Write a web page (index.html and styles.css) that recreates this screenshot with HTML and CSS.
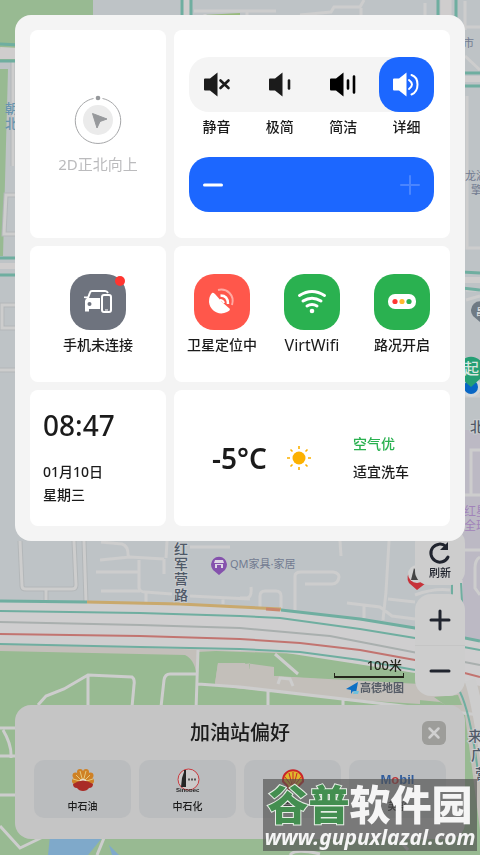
FILE: index.html
```html
<!DOCTYPE html>
<html lang="zh-CN">
<head>
<meta charset="utf-8">
<meta name="viewport" content="width=device-width, initial-scale=1">
<title>地图控制中心</title>
<link rel="stylesheet" href="styles.css">
</head>
<body>
<svg class="map" viewBox="0 0 480 855" preserveAspectRatio="xMidYMin slice" aria-hidden="true">
  <rect width="480" height="855" fill="#bec3c6"/>
  <path d="M440 430H480V640H455V520Z" fill="#bcb9c4"/>
  <path d="M0 0H93V60H0ZM0 69H8L3 256H0Z" fill="#98ba92"/>
  <path d="M204 15L240 13V20H204Z" fill="#98ba7c"/>
  <!-- parks -->
  <path d="M0 645H200L480 670V855H0Z" fill="#c3bfba"/>
  <path d="M0 651L185 655Q196 660 197 680V652L216 651L330 655L440 669V686L420 684L274 676V667L245 663L248 671H249L250 663H218L215 683H240L440 702L465 715L480 830V855H0Z" fill="#98ba92"/>
  <path d="M218 663L249 664V669L274 670V676L420 686V704L340 699L240 689L215 684Z" fill="#c3bfba"/>
  <path d="M240 689L300 693L385 705H240ZM434 697L458 695L462 705H445Z" fill="#98ba92"/>
  <path d="M50 836H100L119 855H48Z" fill="#7fa9ca"/>
  <path d="M102 838L88 855H112L108 842Z" fill="#98ba92"/>
  <!-- side streets -->
  <g fill="none" stroke="#b3b7b9" stroke-width="5">
    <path d="M13 60V166M15 195H6L4 234H15M0 370H15M2 305H20V328H2ZM20 541L22 586Q22 589 26 589H72Q76 589 76 585L74 541M46 590V602M84 541L86 602"/>
  </g>
  <g fill="none" stroke="#cdcdcd" stroke-width="3">
    <path d="M13 60V166M15 195H6L4 234H15M0 370H15M2 305H20V328H2ZM20 541L22 586Q22 589 26 589H72Q76 589 76 585L74 541M46 590V602M84 541L86 602"/>
    <path d="M101 542L122 544Q129 546 128 558M100 560L130 557L164 559M167 541L166 558M164 559V574M96 572H139M139 560V588Q140 592 145 592L172 594M101 591H140M146 593V602M190 547H230M190 596L250 599M223 598V604M340 541L341 556M295 610V576Q295 572 301 572H333Q339 573 339 577Q338 584 332 584H305M240 598H247Q252 597 251 587M260 608V596Q260 591 265 591H276Q281 591 281 596V608M389 541L386 592L383 620M347 603L380 607L392 616L415 619M388 599L415 602M364 606V618M415 595Q434 588 450 590M465 550H480M480 557Q475 560 475 568V588L480 595"/>
    <path d="M194 11H276M205 14V20M247 12V16M300 15L331 12L334 7H360L364 0M361 8L361 16M425 3V15M465 27H480M465 1V30M465 56L480 70M467 96V248H480M466 290H480M470 395H480M471 495V450H480M465 495H480M465 396H480M466 300L480 296"/>
    <path d="M38 705L46 696L64 689L88 675L132 677Q135 679 134 685L132 707M88 675V708M161 707L164 680Q165 674 170 674H196M198 650L196 710M198 684L240 687L480 715M275 654L298 674M268 690V710M278 684L280 678L290 679L293 686M343 698V706"/>
    <path d="M0 728H18M3 730Q12 745 11 758M0 756H18M0 795H18M0 826L20 848L45 836M104 838L97 855M395 835L408 850M290 855Q295 848 320 854"/>
  </g>
  <path d="M186 0V18M446 0V20" stroke="#cfcdcd" stroke-width="11"/>
  <path d="M182 0V20M191 0V20M438 0V20M456 0V20M0 44L20 45M0 61L20 61M462 73H480M462 86H480M0 258H20M0 275H20M462 272L480 273M462 288L480 290" fill="none" stroke="#6faea0" stroke-width="3"/>
  <path d="M0 50L20 51M0 56L20 56M462 79H480M0 266H20M462 280H480" stroke="#cfcdcd" stroke-width="6"/>
  <!-- expressway -->
  <path d="M0 601L180 605L280 609L415 628L480 641V686L415 673L280 652L180 649L0 644Z" fill="#cfcecf"/>
  <g fill="none" stroke-width="3">
    <path d="M0 601L87 602M281 610L360 619L415 628L480 641" stroke="#6faea0"/>
    <path d="M87 602L180 604L240 607L281 609" stroke="#c9a96d"/>
    <path d="M266 609L280 610" stroke="#c9876d"/>
    <path d="M0 611L140 613L240 616L280 618L360 629L415 638L480 650M0 644L140 647L240 649L300 652L360 660L415 670" stroke="#6faea0" stroke-width="2"/>
    <path d="M0 622L140 625L240 628L330 636L480 665" stroke="#a9afae" stroke-width="2"/>
    <path d="M0 634L140 636L240 639L300 643L360 650L415 660L480 677" stroke="#c27470" stroke-width="2"/>
  </g>
  <path d="M457 580V600M470 680Q478 703 490 790" fill="none" stroke="#cdcdcd" stroke-width="11"/>
  <path d="M452 583V600M461 583L464 640M460 692Q471 714 479 780" fill="none" stroke="#6faea0" stroke-width="2"/>
  <!-- labels -->
  <g class="map-road">
    <text x="174" y="554">红</text><text x="174" y="569">军</text><text x="174" y="584">营</text><text x="174" y="600">路</text>
    <text x="468" y="741">来</text><text x="471" y="760">广</text><text x="475" y="779">营</text><text x="470" y="432">北</text>
  </g>
  <g class="map-area">
    <text x="5" y="113">朝</text><text x="5" y="128">北</text>
  </g>
  <g class="map-poi">
    <text x="463" y="47">市</text><text x="465" y="180">龙湖</text><text x="471" y="194">擎</text><text x="230" y="568">QM家具·家居</text>
  </g>
  <g class="map-mall"><text x="464" y="516">红星</text><text x="464" y="530">全球</text></g>
  <!-- pins -->
  <path d="M219 575L213 570A8 8 0 1 1 225 570Z" fill="#8552ad"/>
  <path d="M215 560H223L224 563H214ZM215 564H223V568H221V565H217V568H215Z" fill="#ded6e5"/>
  <path d="M480 322L473 316A9 9 0 1 1 487 316Z" fill="#6f7a84"/><text x="476" y="315" class="pin-small">昌</text>
  <circle cx="471" cy="387" r="10" fill="#d2d7da"/><circle cx="471" cy="387" r="7" fill="#0866c4"/>
  <path d="M471 387L461 378A13 13 0 1 1 481 378Z" fill="#259f74"/><text x="464" y="374" class="pin-start">起</text>
  <path d="M417 590L409 583A10 10 0 1 1 426 583Z" fill="#c7333a"/><circle cx="417" cy="574" r="9" fill="#d0d0d0"/>
  <path d="M411 580L414 568L417 573L419 565V580Z" fill="#444"/>
</svg>

<main class="screen">
  <section class="panel">
    <button class="card compass">
      <svg width="48" height="50" viewBox="0 0 48 50" aria-hidden="true">
        <path d="M28.500 4.500A22.700 22.700 0 1 1 19.500 4.500" fill="none" stroke="#a5a6a8" stroke-width="1"/>
        <circle cx="24" cy="4" r="2.300" fill="#96989b"/><circle cx="24" cy="26" r="15" fill="#ebebeb"/>
        <path d="M18.500 19.500L33 25L26 27.500L23 34Z" fill="#97999c" stroke="#97999c" stroke-linejoin="round"/>
      </svg>
      <span>2D正北向上</span>
    </button>

    <section class="card volume">
      <div class="modes">
        <button class="mode"><span class="mode-icon"><svg width="30" height="28" viewBox="0 0 30 28" aria-hidden="true"><path class="speaker" d="M3 7.500H8L15.500 1.500V25.500L8 19.500H3Q2 19.500 2 18.500V8.500Q2 7.500 3 7.500Z"/><path class="line" d="M18.500 9.500L26.500 17M26.500 9.500L18.500 17"/></svg></span><span>静音</span></button>
        <button class="mode"><span class="mode-icon"><svg width="30" height="28" viewBox="0 0 30 28" aria-hidden="true"><path class="speaker" d="M5 7.500H10L17.500 1.500V25.500L10 19.500H5Q4 19.500 4 18.500V8.500Q4 7.500 5 7.500Z"/><path class="line" d="M24 9.500V17.500"/></svg></span><span>极简</span></button>
        <button class="mode"><span class="mode-icon"><svg width="30" height="28" viewBox="0 0 30 28" aria-hidden="true"><path class="speaker black" d="M3 7.500H8L15.500 1.500V25.500L8 19.500H3Q2 19.500 2 18.500V8.500Q2 7.500 3 7.500Z"/><path class="line black" d="M20 9.500V17.500M26 5.500V21.500"/></svg></span><span>简洁</span></button>
        <button class="mode active"><span class="mode-icon"><svg width="30" height="28" viewBox="0 0 30 28" aria-hidden="true"><path class="speaker" d="M3 7.500H8L15.500 1.500V25.500L8 19.500H3Q2 19.500 2 18.500V8.500Q2 7.500 3 7.500Z"/><path class="wave" d="M18 9Q24 13.500 18 18M20.500 4C28.500 6.500 28.500 20.500 20.500 23.500"/></svg></span><span>详细</span></button>
      </div>
      <div class="level">
        <button aria-label="降低音量"><svg width="20" height="20" viewBox="0 0 20 20"><path d="M1.500 10H18.500"/></svg></button>
        <button aria-label="提高音量" class="faded"><svg width="20" height="20" viewBox="0 0 20 20"><path d="M1 10H19M10 1V19"/></svg></button>
      </div>
    </section>

    <section class="card phone">
      <button class="tile">
        <span class="tile-icon gray"><svg width="56" height="56" viewBox="0 0 56 56" aria-hidden="true"><path d="M18 24L20 18.500Q20.500 17 22 17H35Q37 17 38 19" fill="none" stroke="#fff" stroke-width="2"/><path d="M14 22.500H18V24H30V35H19V37.500H15V27Q15 25 17 24.500L14 24Z" fill="#fff"/><circle cx="19.500" cy="30" r="2" fill="#6e737e"/><rect x="32" y="21" width="9" height="17" rx="2" fill="#6e737e" stroke="#fff" stroke-width="2"/><path d="M35 36H38" stroke="#fff" stroke-width="1"/></svg><i class="dot"></i></span>
        <span>手机未连接</span>
      </button>
    </section>

    <section class="card toggles">
      <button class="tile">
        <span class="tile-icon red"><svg width="56" height="56" viewBox="0 0 56 56" aria-hidden="true"><path d="M18 19Q15 22 15 28C16 37 25 42 33 38Q36 37 36 35L28 28L21 20Q19 18 18 19Z" fill="#fff"/><path d="M26.500 21.500Q34 21.500 34 30" fill="none" stroke="#fff" stroke-width="2.500"/><path d="M26 26Q29 26 30 29" fill="none" stroke="#fff" stroke-width="2"/><path d="M24 16C33 14 41 21 38 31" fill="none" stroke="#ffaaa3" stroke-width="2"/></svg></span>
        <span>卫星定位中</span>
      </button>
      <button class="tile">
        <span class="tile-icon green"><svg width="56" height="56" viewBox="0 0 56 56" aria-hidden="true"><g fill="none" stroke="#fff" stroke-width="3" stroke-linecap="round"><path d="M15.500 21.500Q28 13.500 40.500 21.500M19 27Q28 21.500 37 27M23 32Q28 29 33 32"/></g><circle cx="28" cy="37" r="2.300" fill="#fff"/></svg></span>
        <span class="wifi-name">VirtWifi</span>
      </button>
      <button class="tile">
        <span class="tile-icon green"><svg width="56" height="56" viewBox="0 0 56 56" aria-hidden="true"><rect x="14" y="20" width="28" height="15" rx="7" fill="#fff"/><circle cx="21" cy="27.500" r="2.600" fill="#ff3633"/><circle cx="28" cy="27.500" r="2.600" fill="#ffb82d"/><circle cx="35" cy="27.500" r="2.600" fill="#2ab150"/></svg></span>
        <span>路况开启</span>
      </button>
    </section>

    <section class="card clock">
      <time class="time">08:47</time>
      <span>01月10日</span>
      <span>星期三</span>
    </section>

    <section class="card weather">
      <strong>-5°C</strong>
      <svg width="24" height="24" viewBox="0 0 24 24" aria-hidden="true"><circle cx="12" cy="12" r="6.500" fill="#fcb100"/><path d="M12 0V3M12 21V24M0 12H3M21 12H24M3.500 3.500L5.500 5.500M18.500 18.500L20.500 20.500M20.500 3.500L18.500 5.500M5.500 18.500L3.500 20.500" stroke="#fcb100" stroke-width="1.600"/></svg>
      <div class="advice"><span class="air">空气优</span><span>适宜洗车</span></div>
    </section>
  </section>

  <div class="map-tools">
    <div class="scale">
      <span class="scale-text">100米</span>
      <span class="scale-bar"></span>
      <span class="brand"><svg width="14" height="12" viewBox="0 0 14 12" aria-hidden="true"><path d="M0 7L12 0L10 11L7 9L5 12L5 8Z" fill="#0c6fc4"/><path d="M8 9L13 9L12 12H7Z" fill="#70c0db"/></svg>高德地图</span>
    </div>
    <div class="controls">
      <button class="refresh"><svg width="24" height="24" viewBox="0 0 24 24" aria-hidden="true"><path d="M20 16A9 9 0 1 1 18 5.500" fill="none" stroke="#20242e" stroke-width="3" stroke-linecap="round"/><path d="M20 1V9H12Z" fill="#20242e"/></svg><span>刷新</span></button>
      <div class="zoom">
        <button aria-label="放大"><svg width="22" height="22" viewBox="0 0 22 22"><path d="M2 11H20M11 2V20"/></svg></button>
        <button aria-label="缩小"><svg width="22" height="22" viewBox="0 0 22 22"><path d="M2 11H20"/></svg></button>
      </div>
    </div>
  </div>

  <section class="sheet">
    <header>
      <h2>加油站偏好</h2>
      <button class="close" aria-label="关闭"><svg width="24" height="24" viewBox="0 0 24 24"><path d="M7.500 7.500L16.500 16.500M16.500 7.500L7.500 16.500" stroke="#d0d0d0" stroke-width="2.500" stroke-linecap="round"/></svg></button>
    </header>
    <div class="stations">
      <button><svg width="24" height="24" viewBox="0 0 24 24" aria-hidden="true"><g fill="#cf8125"><circle cx="4" cy="13" r="3"/><circle cx="4.500" cy="7.500" r="3"/><circle cx="9" cy="4" r="3"/><circle cx="15" cy="4" r="3"/><circle cx="19.500" cy="7.500" r="3"/><circle cx="20" cy="13" r="3"/><circle cx="12" cy="11" r="8"/></g><path d="M12 14L5 7M12 14L9 3M12 14L15 3M12 14L19 7M12 14L2 11M12 14L22 11" stroke="#e6c87d" stroke-width="1"/><path d="M8 13Q12 8 16 13Z" fill="#e6dec9"/><path d="M2 16Q12 9 22 16Q22 20 18 20Q16 23 12 23Q8 23 6 20Q2 20 2 16Z" fill="#a92b26"/></svg><span>中石油</span></button>
      <button><svg width="24" height="24" viewBox="0 0 24 24" aria-hidden="true"><circle cx="12.500" cy="11.500" r="10.500" fill="#cccaca" stroke="#ca3b40"/><path d="M8 2H10V19H8ZM6 10L8 4V19H5Z" fill="#252525"/><path d="M12 11.500H21" stroke="#555" stroke-width="2" stroke-dasharray="2 1"/><text x="0" y="24" class="sinopec">Sinopec</text></svg><span>中石化</span></button>
      <button><svg width="24" height="24" viewBox="0 0 24 24" aria-hidden="true"><path d="M5 18L1 14C0 -3 24 -3 23 14L19 18L17 22H7Z" fill="#cb2428"/><path d="M7 17L3 13C3 0 21 0 21 13L17 17L16 20H8Z" fill="#dfb72d"/><path d="M10 17L4 9M11 17L8 5M12 17V4M13 17L16 5M14 17L20 9" stroke="#cb2428"/></svg><span>壳牌</span></button>
      <button><span class="mobil">M<b>o</b>bil</span><span>美孚</span></button>
    </div>
  </section>

  <aside class="watermark">
    <div class="mark-name"><b>谷普</b>软件园</div>
    <div class="mark-url">www.gupuxlazal.com</div>
  </aside>
</main>
</body>
</html>
```

FILE: styles.css
```css
* { box-sizing: border-box; }
body {
  margin: 0;
  background: #bec3c6;
  color: #1b1b1b;
  font: 500 14px/20px "Noto Sans", "Noto Sans CJK SC", sans-serif;
}
button {
  margin: 0;
  padding: 0;
  border: 0;
  background: none;
  color: inherit;
  font: inherit;
}
svg { display: block; flex: none; }

.map { position: fixed; inset: 0; width: 100%; height: 100%; z-index: -1; }
.map text { font-family: "Noto Sans", "Noto Sans CJK SC", sans-serif; }
.map-road text { font-size: 14px; fill: #4f5967; stroke: #c9cccf; stroke-width: 2px; paint-order: stroke; }
.map-area text { font-size: 13px; fill: #6794ad; }
.map-poi text { font-size: 11px; font-weight: 400; fill: #727b91; }
.map-mall text { font-size: 12px; font-weight: 400; fill: #a183b9; }
.map .pin-small { font-size: 9px; fill: #e0e0e0; }
.map .pin-start { font-size: 15px; fill: #d8e5df; }

.screen { position: relative; min-height: 100vh; padding: 15px 15px 16px; }

.panel {
  position: relative;
  z-index: 2;
  display: grid;
  grid-template-columns: 136fr 276fr;
  grid-template-rows: 208px 136px 136px;
  gap: 8px;
  padding: 15px;
  border-radius: 16px;
  background: #f4f4f4;
}
.card { min-width: 0; border-radius: 8px; background: #fff; }
.compass {
  display: flex;
  flex-direction: column;
  align-items: center;
  justify-content: center;
  gap: 10px;
  color: #bbbbbd;
  font-size: 15px;
  font-weight: 400;
}

.volume { padding: 27px 16px 0 15px; }
.modes { position: relative; display: flex; justify-content: space-between; }
.modes::before {
  content: "";
  position: absolute;
  inset: 0 0 auto;
  height: 55px;
  border-radius: 20px;
  background: #f4f4f4;
}
.mode { position: relative; display: flex; flex-direction: column; align-items: center; gap: 5px; width: 55px; }
.mode-icon { display: grid; place-items: center; width: 100%; height: 55px; border-radius: 20px; }
.active .mode-icon { background: #1c67ff; }
.speaker { fill: #1b1b1b; }
.line { fill: none; stroke: #1b1b1b; stroke-width: 2.6px; stroke-linecap: round; }
.speaker.black { fill: #000; }
.line.black { stroke: #000; }
.active .speaker { fill: #fff; }
.wave { fill: none; stroke: #fff; stroke-width: 2px; stroke-linecap: round; }
.level {
  display: flex;
  align-items: center;
  justify-content: space-between;
  height: 55px;
  margin-top: 20px;
  padding: 0 14px;
  border-radius: 20px;
  background: #1c67ff;
}
.level path { stroke: #fff; stroke-width: 3px; stroke-linecap: round; }
.level .faded { opacity: .2; }
.level .faded path { stroke-width: 2px; }

.phone, .toggles { display: flex; justify-content: center; padding-top: 28px; }
.toggles { display: grid; grid-template-columns: repeat(3, 90px); }
.tile { display: flex; flex-direction: column; align-items: center; gap: 5px; white-space: nowrap; }
.tile-icon { position: relative; width: 56px; height: 56px; border-radius: 20px; }
.gray { background: #6e737e; }
.red { background: #ff574b; }
.green { background: #2ab150; }
.dot { position: absolute; top: 2px; right: 1px; width: 10px; height: 10px; border-radius: 50%; background: #ff3530; }
.wifi-name { font-size: 16px; font-weight: 400; }

.clock { display: flex; flex-direction: column; gap: 3px; padding: 18px 13px; }
.time { margin-bottom: 17px; font-size: 28px; line-height: 34px; }
.weather { display: flex; align-items: center; padding-left: 38px; }
.weather strong { width: 75px; font-size: 28px; font-weight: 600; line-height: 36px; white-space: nowrap; }
.advice { display: flex; flex-direction: column; gap: 8px; margin-left: 42px; }
.air { color: #2ab150; }

.map-tools { display: flex; align-items: flex-end; justify-content: flex-end; gap: 11px; margin-top: -12px; }
.scale { width: 70px; color: #24261b; }
.scale-text { display: block; padding-right: 2px; text-align: right; font-size: 13px; line-height: 15px; }
.scale-bar { display: block; height: 5px; border: 1px solid #24261b; border-width: 0 1px 2px; }
.brand { display: flex; align-items: center; justify-content: flex-end; margin: 3px 0 1px; font-size: 11px; line-height: 14px; font-weight: 700; color: #555c66; white-space: nowrap; }
.controls { width: 50px; color: #20242e; }
.refresh {
  display: flex;
  flex-direction: column;
  align-items: center;
  width: 100%;
  padding: 12px 0 4px;
  border-radius: 14px;
  background: #cdcdcd;
  font-size: 11px;
  line-height: 16px;
}
.zoom { margin-top: 9px; border-radius: 16px; background: #cdcdcd; }
.zoom button { display: grid; place-items: center; width: 100%; height: 51px; }
.zoom button + button { border-top: 1px solid #c5c5c5; }
.zoom path { stroke: #20242e; stroke-width: 3px; stroke-linecap: round; }

.sheet { margin-top: 9px; padding: 15px 19px 21px; border-radius: 16px; background: #c5c5c5; }
.sheet header { display: grid; grid-template-columns: 24px 1fr 24px; align-items: center; height: 25px; }
.sheet h2 { grid-column: 2; margin: 0; text-align: center; font-size: 20px; line-height: 24px; font-weight: 500; }
.close { width: 24px; height: 24px; border-radius: 6px; background: #9d9d9a; }
.stations { display: grid; grid-template-columns: repeat(4, 1fr); gap: 8px; margin-top: 15px; }
.stations button {
  display: flex;
  flex-direction: column;
  align-items: center;
  gap: 6px;
  height: 58px;
  padding-top: 8px;
  border-radius: 10px;
  background: #babcbe;
  font-size: 10px;
  line-height: 16px;
}
.sinopec { font: 700 6px "Liberation Sans", sans-serif; fill: #252525; }
.mobil { color: #315d9c; font: 700 13px/24px "Liberation Sans", sans-serif; }
.mobil b { color: #bd3437; }

.watermark {
  position: absolute;
  z-index: 3;
  right: 3px;
  bottom: 4px;
  width: 214px;
  height: 72px;
  background: rgb(80 80 80 / .65);
  color: #f5f5f5;
  text-align: center;
  white-space: nowrap;
}
.mark-name { font: 900 41px/47px "Noto Sans CJK SC", sans-serif; }
.mark-name b { color: #438e50; font-weight: inherit; -webkit-text-stroke: 2px #e5eee5; paint-order: stroke; }
.mark-url { font: italic 700 21px/23px "Noto Sans", sans-serif; }
```
